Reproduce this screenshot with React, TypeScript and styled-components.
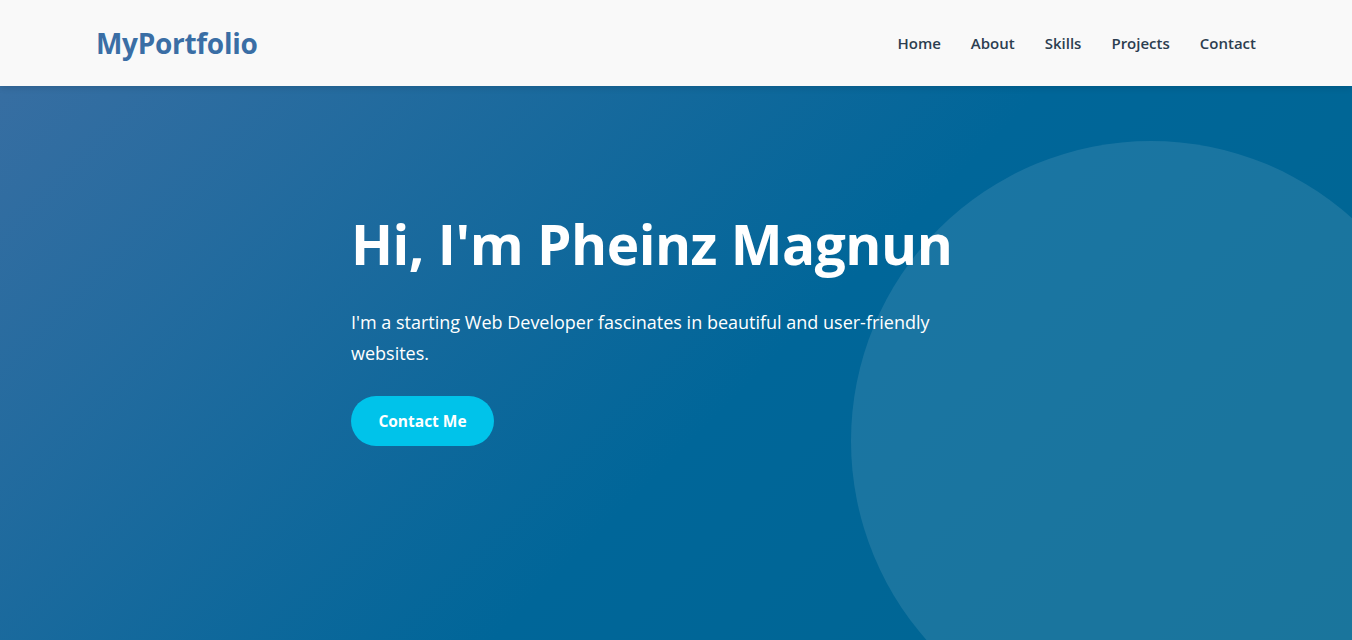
import React from "react";
import styled, { createGlobalStyle } from "styled-components";

const GlobalStyle = createGlobalStyle`
  * { box-sizing: border-box; }
  html, body { margin: 0; padding: 0; }
  body {
    font-family: "Open Sans", "Noto Sans", "DejaVu Sans", sans-serif;
    background: #006699;
    overflow: hidden;
  }
`;

const Page = styled.div`
  display: flex;
  flex-direction: column;
  min-height: 640px;
`;

const Header = styled.header`
  height: 86px;
  flex-shrink: 0;
  background: #f9f9f9;
  display: flex;
  align-items: center;
  justify-content: space-between;
  padding: 0 96px;
  box-shadow: 0 2px 6px rgba(0, 0, 0, 0.12);
  position: relative;
  z-index: 2;
`;

const Logo = styled.div`
  font-size: 28px;
  font-weight: 700;
  color: #3a6ea5;
  letter-spacing: -0.3px;
`;

const Nav = styled.nav`
  display: flex;
  gap: 30px;
`;

const NavLink = styled.a`
  font-size: 15px;
  font-weight: 600;
  color: #2c3e50;
  text-decoration: none;
`;

const Hero = styled.section`
  flex: 1;
  position: relative;
  overflow: hidden;
  background: linear-gradient(135deg, #376ea2 0%, #006699 55%, #006691 100%);
  padding: 125px 0 0;
`;

const Circle = styled.div`
  position: absolute;
  top: 55px;
  right: -99px;
  width: 600px;
  height: 600px;
  border-radius: 50%;
  background: rgba(255, 255, 255, 0.1);
`;

const Content = styled.div`
  position: relative;
  z-index: 1;
  width: 650px;
  margin-left: 351px;
  color: #ffffff;
`;

const Title = styled.h1`
  margin: 0 0 30px;
  font-size: 55px;
  font-weight: 700;
  line-height: 1.2;
  letter-spacing: -0.5px;
  white-space: nowrap;
`;

const Lead = styled.p`
  margin: 0 0 27px;
  max-width: 600px;
  font-size: 18px;
  line-height: 31px;
  color: #ffffff;
`;

const Button = styled.a`
  display: inline-flex;
  align-items: center;
  justify-content: center;
  width: 143px;
  height: 50px;
  border-radius: 25px;
  background: #00c3ea;
  color: #ffffff;
  font-size: 15.5px;
  font-weight: 700;
  text-decoration: none;
`;

export default function App() {
  return (
    <>
      <GlobalStyle />
      <Page>
        <Header>
          <Logo>MyPortfolio</Logo>
          <Nav>
            <NavLink href="#home">Home</NavLink>
            <NavLink href="#about">About</NavLink>
            <NavLink href="#skills">Skills</NavLink>
            <NavLink href="#projects">Projects</NavLink>
            <NavLink href="#contact">Contact</NavLink>
          </Nav>
        </Header>
        <Hero>
          <Circle />
          <Content>
            <Title>Hi, I'm Pheinz Magnun</Title>
            <Lead>
              I'm a starting Web Developer fascinates in beautiful and
              user-friendly websites.
            </Lead>
            <Button href="#contact">Contact Me</Button>
          </Content>
        </Hero>
      </Page>
    </>
  );
}
